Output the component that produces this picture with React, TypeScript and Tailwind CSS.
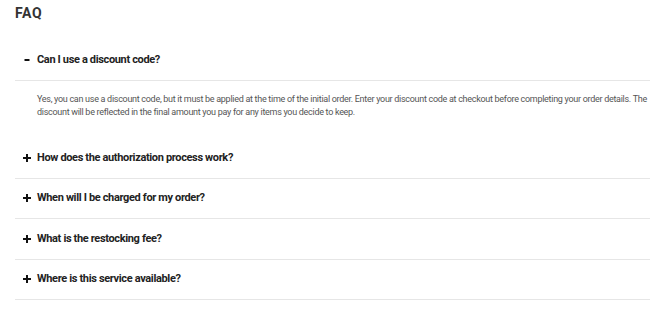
import React, { useState } from 'react';

interface FaqItem {
  question: string;
  answer: string;
}

const faqs: FaqItem[] = [
  {
    question: 'Can I use a discount code?',
    answer:
      'Yes, you can use a discount code, but it must be applied at the time of the initial order. Enter your discount code at checkout before completing your order details. The discount will be reflected in the final amount you pay for any items you decide to keep.',
  },
  {
    question: 'How does the authorization process work?',
    answer: 'We place a temporary authorization on your card when you order.',
  },
  {
    question: 'When will I be charged for my order?',
    answer: 'You are charged once your try-on period ends.',
  },
  {
    question: 'What is the restocking fee?',
    answer: 'A small fee applies to returned items.',
  },
  {
    question: 'Where is this service available?',
    answer: 'The service is currently available in select regions.',
  },
];

const PlusIcon = () => (
  <svg width="8" height="8" viewBox="0 0 8 8" className="block">
    <path d="M4 0v8M0 4h8" stroke="#111" strokeWidth="2" />
  </svg>
);

const MinusIcon = () => (
  <svg width="6" height="8" viewBox="0 0 6 8" className="block">
    <path d="M0.5 4h5" stroke="#111" strokeWidth="2" />
  </svg>
);

const App: React.FC = () => {
  const [open, setOpen] = useState<number | null>(0);

  return (
    <div
      className="min-h-[311px] bg-white pl-[15px] pr-[20px] text-[#222]"
      style={{ fontFamily: 'Roboto, "Liberation Sans", sans-serif' }}
    >
      <h1 className="pt-[2px] text-[14px] leading-[22px] font-bold tracking-[0.6px] text-[#333]">
        FAQ
      </h1>

      <div className="mt-[16px]">
        {faqs.map((item, i) => {
          const isOpen = open === i;
          return (
            <div key={item.question} className={isOpen ? '' : 'border-b border-[#e6e6e6]'}>
              <button
                onClick={() => setOpen(isOpen ? null : i)}
                className={`flex w-full items-center text-left ${isOpen ? 'h-[40px]' : 'h-[39.5px]'}`}
              >
                <span className="flex w-[22px] items-center justify-center pl-[1px]">
                  {isOpen ? <MinusIcon /> : <PlusIcon />}
                </span>
                <span className="text-[11px] font-bold tracking-[-0.35px] text-[#222]">
                  {item.question}
                </span>
              </button>

              {isOpen && (
                <div className="border-t border-[#e6e6e6] pt-[12px] pb-[19px] pl-[22px]">
                  <p className="text-[9px] leading-[13px] tracking-[-0.29px] text-[#555]">
                    {item.answer}
                  </p>
                </div>
              )}
            </div>
          );
        })}
      </div>
    </div>
  );
};

export default App;
